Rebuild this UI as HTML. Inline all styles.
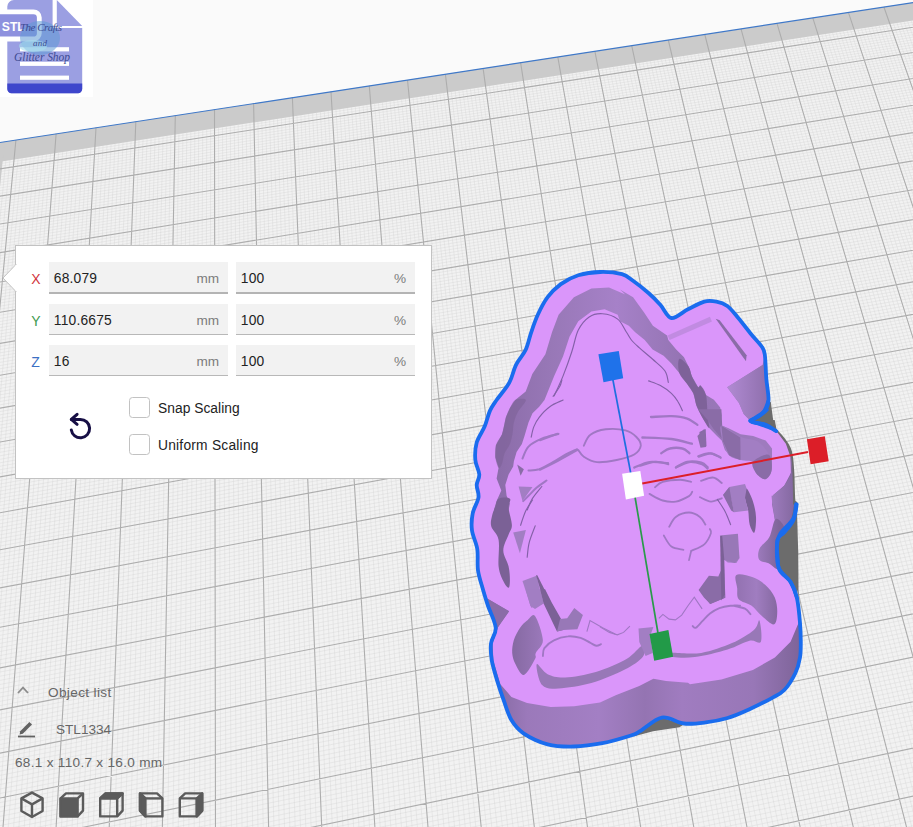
<!DOCTYPE html>
<html><head><meta charset="utf-8"><title>STL1334 - scale</title>
<style>
html,body{margin:0;padding:0;}
body{width:913px;height:827px;overflow:hidden;background:#fafafa;font-family:"Liberation Sans",sans-serif;position:relative;}
#scene{position:absolute;left:0;top:0;width:913px;height:827px;display:block;}
.logo{position:absolute;left:0;top:0;width:93px;height:97px;background:#ffffff;}
.panel{position:absolute;left:15px;top:245px;width:415px;height:232px;background:#fff;border:1px solid #c2c2c2;box-sizing:content-box;}
.notch{position:absolute;left:1.6px;top:264px;}
.row{position:absolute;left:0;height:32px;width:100%;}
.axis{position:absolute;left:15.2px;top:9px;font-size:14px;line-height:16px;}
.field{position:absolute;top:0;height:30px;width:179px;background:#f2f2f2;border-bottom:2px solid #b4b4b4;}
.r2 .field{height:30.4px;border-bottom:1.6px solid #b8b8b8;}
.field .v{position:absolute;left:4.8px;top:9.2px;font-size:13.8px;line-height:16px;color:#222;letter-spacing:0.2px;}
.field .u{position:absolute;right:8.8px;top:9.2px;font-size:13.6px;line-height:16px;color:#7c7c7c;}
.cb{position:absolute;left:113px;width:19px;height:19px;border:1.5px solid #c2c2c2;border-radius:3.5px;background:#fff;}
.cbl{position:absolute;left:142px;font-size:13.8px;line-height:16px;color:#222;letter-spacing:0.15px;}
.ol{position:absolute;color:#666;font-size:13.6px;line-height:16px;white-space:nowrap;}

</style></head><body>
<svg id="scene" width="913" height="827" viewBox="0 0 913 827">
<rect width="913" height="827" fill="#fafafa"/>
<path d="M-65.3,152.5 L988.9,-9.1 L1428.0,1060.6 L-243.5,1473.7Z" fill="#f2f2f2"/>
<path d="M-65.3,152.5 L988.9,-9.1 L995.8,7.7 L-67.9,172.2Z" fill="#cbcbcb"/>
<path d="M-65.3,152.5 L4.6,141.8 L-4.4,230.4 L-77.4,242.0Z" fill="#cbcbcb"/>
<path d="M-22.8,165.3L-169.2,1455.3M-18.7,164.6L-162.5,1453.7M-14.6,164.0L-155.8,1452.0M-10.5,163.4L-149.1,1450.4M-6.4,162.7L-142.4,1448.7M-2.3,162.1L-135.7,1447.1M1.8,161.5L-129.0,1445.4M5.8,160.8L-122.3,1443.8M9.9,160.2L-115.7,1442.1M18.1,158.9L-102.3,1438.8M22.1,158.3L-95.7,1437.2M26.2,157.7L-89.0,1435.5M30.3,157.1L-82.4,1433.9M34.3,156.4L-75.8,1432.2M38.4,155.8L-69.1,1430.6M42.4,155.2L-62.5,1429.0M46.5,154.5L-55.9,1427.3M50.5,153.9L-49.3,1425.7M58.6,152.7L-36.1,1422.4M62.7,152.0L-29.5,1420.8M66.7,151.4L-22.9,1419.2M70.8,150.8L-16.4,1417.6M74.8,150.2L-9.8,1415.9M78.8,149.5L-3.2,1414.3M82.9,148.9L3.3,1412.7M86.9,148.3L9.9,1411.1M90.9,147.7L16.4,1409.5M99.0,146.4L29.5,1406.2M103.0,145.8L36.0,1404.6M107.0,145.2L42.5,1403.0M111.0,144.6L49.0,1401.4M115.0,143.9L55.5,1399.8M119.0,143.3L62.0,1398.2M123.0,142.7L68.5,1396.6M127.0,142.1L75.0,1395.0M131.0,141.5L81.5,1393.4M139.0,140.2L94.4,1390.2M143.0,139.6L100.9,1388.6M147.0,139.0L107.4,1387.0M151.0,138.4L113.8,1385.4M155.0,137.8L120.3,1383.8M159.0,137.1L126.7,1382.2M163.0,136.5L133.1,1380.6M167.0,135.9L139.5,1379.0M170.9,135.3L146.0,1377.4M178.9,134.1L158.8,1374.3M182.9,133.4L165.2,1372.7M186.8,132.8L171.6,1371.1M190.8,132.2L178.0,1369.5M194.8,131.6L184.3,1368.0M198.7,131.0L190.7,1366.4M202.7,130.4L197.1,1364.8M206.7,129.8L203.4,1363.2M210.6,129.2L209.8,1361.7M218.5,127.9L222.5,1358.5M222.5,127.3L228.8,1357.0M226.4,126.7L235.2,1355.4M230.3,126.1L241.5,1353.8M234.3,125.5L247.8,1352.3M238.2,124.9L254.1,1350.7M242.2,124.3L260.4,1349.1M246.1,123.7L266.7,1347.6M250.0,123.1L273.0,1346.0M257.9,121.8L285.6,1342.9M261.8,121.2L291.9,1341.4M265.7,120.6L298.2,1339.8M269.7,120.0L304.4,1338.3M273.6,119.4L310.7,1336.7M277.5,118.8L317.0,1335.2M281.4,118.2L323.2,1333.6M285.3,117.6L329.5,1332.1M289.2,117.0L335.7,1330.5M297.0,115.8L348.1,1327.5M300.9,115.2L354.4,1325.9M304.8,114.6L360.6,1324.4M308.7,114.0L366.8,1322.9M312.6,113.4L373.0,1321.3M316.5,112.8L379.2,1319.8M320.4,112.2L385.4,1318.3M324.3,111.6L391.6,1316.7M328.2,111.0L397.7,1315.2M336.0,109.8L410.1,1312.2M339.8,109.2L416.2,1310.6M343.7,108.6L422.4,1309.1M347.6,108.0L428.6,1307.6M351.5,107.4L434.7,1306.1M355.3,106.8L440.8,1304.6M359.2,106.2L447.0,1303.0M363.1,105.6L453.1,1301.5M366.9,105.0L459.2,1300.0M374.6,103.8L471.4,1297.0M378.5,103.2L477.5,1295.5M382.4,102.6L483.6,1294.0M386.2,102.0L489.7,1292.5M390.1,101.4L495.8,1291.0M393.9,100.8L501.9,1289.5M397.7,100.2L508.0,1288.0M401.6,99.6L514.1,1286.5M405.4,99.0L520.1,1285.0M413.1,97.8L532.2,1282.0M416.9,97.2L538.3,1280.5M420.8,96.6L544.3,1279.0M424.6,96.0L550.4,1277.5M428.4,95.5L556.4,1276.0M432.3,94.9L562.4,1274.5M436.1,94.3L568.4,1273.0M439.9,93.7L574.4,1271.5M443.7,93.1L580.5,1270.0M451.3,91.9L592.5,1267.1M455.2,91.3L598.4,1265.6M459.0,90.7L604.4,1264.1M462.8,90.1L610.4,1262.6M466.6,89.6L616.4,1261.2M470.4,89.0L622.4,1259.7M474.2,88.4L628.3,1258.2M478.0,87.8L634.3,1256.7M481.8,87.2L640.2,1255.3M489.4,86.0L652.1,1252.3M493.2,85.4L658.1,1250.9M496.9,84.9L664.0,1249.4M500.7,84.3L669.9,1247.9M504.5,83.7L675.8,1246.5M508.3,83.1L681.7,1245.0M512.1,82.5L687.7,1243.6M515.8,81.9L693.6,1242.1M519.6,81.4L699.5,1240.6M527.2,80.2L711.2,1237.7M530.9,79.6L717.1,1236.3M534.7,79.0L723.0,1234.8M538.5,78.4L728.9,1233.4M542.2,77.9L734.7,1231.9M546.0,77.3L740.6,1230.5M549.7,76.7L746.5,1229.0M553.5,76.1L752.3,1227.6M557.2,75.5L758.1,1226.1M564.7,74.4L769.8,1223.2M568.5,73.8L775.7,1221.8M572.2,73.2L781.5,1220.4M576.0,72.6L787.3,1218.9M579.7,72.1L793.1,1217.5M583.4,71.5L798.9,1216.1M587.2,70.9L804.7,1214.6M590.9,70.3L810.5,1213.2M594.6,69.7L816.3,1211.8M602.1,68.6L827.9,1208.9M605.8,68.0L833.6,1207.5M609.5,67.4L839.4,1206.0M613.3,66.9L845.2,1204.6M617.0,66.3L850.9,1203.2M620.7,65.7L856.7,1201.8M624.4,65.1L862.4,1200.3M628.1,64.6L868.2,1198.9M631.8,64.0L873.9,1197.5M639.2,62.8L885.4,1194.7M642.9,62.3L891.1,1193.3M646.7,61.7L896.8,1191.9M650.3,61.1L902.6,1190.4M654.0,60.6L908.3,1189.0M657.7,60.0L914.0,1187.6M661.4,59.4L919.7,1186.2M665.1,58.8L925.4,1184.8M668.8,58.3L931.0,1183.4M676.2,57.1L942.4,1180.6M679.9,56.6L948.1,1179.2M683.5,56.0L953.7,1177.8M687.2,55.4L959.4,1176.4M690.9,54.9L965.1,1175.0M694.6,54.3L970.7,1173.6M698.2,53.7L976.4,1172.2M701.9,53.1L982.0,1170.8M705.6,52.6L987.6,1169.4M712.9,51.4L998.9,1166.6M716.6,50.9L1004.5,1165.2M720.2,50.3L1010.1,1163.8M723.9,49.8L1015.7,1162.5M727.5,49.2L1021.3,1161.1M731.2,48.6L1027.0,1159.7M734.8,48.1L1032.5,1158.3M738.5,47.5L1038.1,1156.9M742.1,46.9L1043.7,1155.5M749.4,45.8L1054.9,1152.8M753.1,45.2L1060.5,1151.4M756.7,44.7L1066.0,1150.0M760.3,44.1L1071.6,1148.7M764.0,43.5L1077.1,1147.3M767.6,43.0L1082.7,1145.9M771.2,42.4L1088.2,1144.5M774.9,41.9L1093.8,1143.2M778.5,41.3L1099.3,1141.8M785.7,40.2L1110.4,1139.1M789.3,39.6L1115.9,1137.7M793.0,39.1L1121.4,1136.3M796.6,38.5L1126.9,1135.0M800.2,37.9L1132.4,1133.6M803.8,37.4L1137.9,1132.3M807.4,36.8L1143.4,1130.9M811.0,36.3L1148.9,1129.5M814.6,35.7L1154.4,1128.2M821.8,34.6L1165.4,1125.5M825.4,34.0L1170.8,1124.1M829.0,33.5L1176.3,1122.8M832.6,32.9L1181.8,1121.4M836.2,32.4L1187.2,1120.1M839.8,31.8L1192.7,1118.7M843.4,31.3L1198.1,1117.4M847.0,30.7L1203.6,1116.0M850.6,30.2L1209.0,1114.7M857.7,29.0L1219.9,1112.0M861.3,28.5L1225.3,1110.7M864.9,27.9L1230.7,1109.3M868.5,27.4L1236.1,1108.0M872.0,26.8L1241.6,1106.6M875.6,26.3L1247.0,1105.3M879.2,25.7L1252.4,1104.0M882.7,25.2L1257.8,1102.6M886.3,24.6L1263.2,1101.3M893.4,23.5L1273.9,1098.6M897.0,23.0L1279.3,1097.3M900.5,22.4L1284.7,1096.0M904.1,21.9L1290.0,1094.7M907.6,21.3L1295.4,1093.3M911.2,20.8L1300.8,1092.0M914.7,20.2L1306.1,1090.7M918.3,19.7L1311.5,1089.4M921.8,19.1L1316.8,1088.0M928.9,18.0L1327.5,1085.4M932.5,17.5L1332.8,1084.1M936.0,16.9L1338.1,1082.8M939.5,16.4L1343.5,1081.5M943.1,15.8L1348.8,1080.1M946.6,15.3L1354.1,1078.8M950.1,14.8L1359.4,1077.5M953.6,14.2L1364.7,1076.2M957.2,13.7L1370.0,1074.9M964.2,12.6L1380.6,1072.3M967.7,12.0L1385.9,1071.0M971.2,11.5L1391.2,1069.7M974.8,10.9L1396.4,1068.4M978.3,10.4L1401.7,1067.1M981.8,9.9L1407.0,1065.8M985.3,9.3L1412.2,1064.5M988.8,8.8L1417.5,1063.2M992.3,8.2L1422.7,1061.9M-68.2,174.2L996.5,9.3M-68.6,176.9L997.4,11.6M-69.3,182.4L999.3,16.3M-69.7,185.2L1000.3,18.6M-70.1,187.9L1001.3,21.0M-70.4,190.7L1002.2,23.3M-70.8,193.5L1003.2,25.7M-71.2,196.3L1004.2,28.1M-71.6,199.1L1005.2,30.4M-71.9,201.9L1006.1,32.8M-72.3,204.7L1007.1,35.2M-73.1,210.4L1009.1,40.0M-73.5,213.2L1010.1,42.4M-73.9,216.0L1011.0,44.8M-74.2,218.9L1012.0,47.2M-74.6,221.8L1013.0,49.6M-75.0,224.6L1014.0,52.1M-75.4,227.5L1015.0,54.5M-75.8,230.4L1016.0,56.9M-76.2,233.3L1017.0,59.4M-77.0,239.1L1019.0,64.3M-77.4,242.0L1020.0,66.7M-77.7,244.9L1021.1,69.2M-78.1,247.9L1022.1,71.7M-78.5,250.8L1023.1,74.1M-78.9,253.7L1024.1,76.6M-79.3,256.7L1025.1,79.1M-79.7,259.7L1026.2,81.6M-80.1,262.6L1027.2,84.1M-80.9,268.6L1029.3,89.2M-81.3,271.6L1030.3,91.7M-81.8,274.6L1031.3,94.2M-82.2,277.6L1032.4,96.8M-82.6,280.6L1033.4,99.3M-83.0,283.7L1034.5,101.8M-83.4,286.7L1035.5,104.4M-83.8,289.7L1036.6,107.0M-84.2,292.8L1037.6,109.5M-85.0,298.9L1039.7,114.7M-85.5,302.0L1040.8,117.3M-85.9,305.1L1041.9,119.9M-86.3,308.2L1042.9,122.5M-86.7,311.3L1044.0,125.1M-87.1,314.4L1045.1,127.7M-87.5,317.5L1046.2,130.3M-88.0,320.7L1047.2,133.0M-88.4,323.8L1048.3,135.6M-89.2,330.1L1050.5,140.9M-89.7,333.3L1051.6,143.5M-90.1,336.5L1052.7,146.2M-90.5,339.7L1053.8,148.9M-91.0,342.9L1054.9,151.6M-91.4,346.1L1056.0,154.2M-91.8,349.3L1057.1,156.9M-92.3,352.5L1058.2,159.6M-92.7,355.7L1059.3,162.3M-93.6,362.2L1061.5,167.8M-94.0,365.5L1062.6,170.5M-94.5,368.8L1063.8,173.2M-94.9,372.0L1064.9,176.0M-95.3,375.3L1066.0,178.7M-95.8,378.6L1067.1,181.5M-96.2,381.9L1068.3,184.2M-96.7,385.2L1069.4,187.0M-97.1,388.6L1070.6,189.8M-98.0,395.3L1072.8,195.4M-98.5,398.6L1074.0,198.2M-98.9,402.0L1075.2,201.0M-99.4,405.4L1076.3,203.8M-99.9,408.7L1077.5,206.6M-100.3,412.1L1078.6,209.4M-100.8,415.5L1079.8,212.3M-101.2,419.0L1081.0,215.1M-101.7,422.4L1082.1,218.0M-102.6,429.3L1084.5,223.7M-103.1,432.7L1085.7,226.6M-103.6,436.2L1086.9,229.5M-104.0,439.7L1088.0,232.4M-104.5,443.2L1089.2,235.3M-105.0,446.6L1090.4,238.2M-105.4,450.2L1091.6,241.1M-105.9,453.7L1092.8,244.0M-106.4,457.2L1094.0,247.0M-107.3,464.3L1096.4,252.8M-107.8,467.9L1097.7,255.8M-108.3,471.4L1098.9,258.8M-108.8,475.0L1100.1,261.7M-109.3,478.6L1101.3,264.7M-109.8,482.2L1102.5,267.7M-110.3,485.8L1103.8,270.7M-110.7,489.4L1105.0,273.7M-111.2,493.1L1106.2,276.7M-112.2,500.4L1108.7,282.8M-112.7,504.1L1110.0,285.8M-113.2,507.7L1111.2,288.9M-113.7,511.4L1112.5,291.9M-114.2,515.1L1113.7,295.0M-114.7,518.9L1115.0,298.1M-115.2,522.6L1116.3,301.1M-115.7,526.3L1117.5,304.2M-116.2,530.1L1118.8,307.3M-117.2,537.6L1121.4,313.6M-117.8,541.4L1122.6,316.7M-118.3,545.2L1123.9,319.8M-118.8,549.0L1125.2,323.0M-119.3,552.8L1126.5,326.1M-119.8,556.7L1127.8,329.3M-120.3,560.5L1129.1,332.4M-120.8,564.4L1130.4,335.6M-121.4,568.2L1131.7,338.8M-122.4,576.0L1134.4,345.2M-122.9,579.9L1135.7,348.4M-123.5,583.8L1137.0,351.6M-124.0,587.8L1138.3,354.9M-124.5,591.7L1139.7,358.1M-125.1,595.7L1141.0,361.4M-125.6,599.6L1142.3,364.6M-126.1,603.6L1143.7,367.9M-126.7,607.6L1145.0,371.2M-127.8,615.6L1147.7,377.8M-128.3,619.6L1149.1,381.1M-128.9,623.7L1150.4,384.4M-129.4,627.7L1151.8,387.7M-130.0,631.8L1153.2,391.1M-130.5,635.9L1154.6,394.4M-131.1,640.0L1155.9,397.8M-131.6,644.1L1157.3,401.2M-132.2,648.2L1158.7,404.5M-133.3,656.5L1161.5,411.3M-133.8,660.7L1162.9,414.7M-134.4,664.9L1164.3,418.1M-135.0,669.1L1165.7,421.6M-135.5,673.3L1167.1,425.0M-136.1,677.5L1168.5,428.5M-136.7,681.7L1169.9,431.9M-137.3,686.0L1171.4,435.4M-137.8,690.2L1172.8,438.9M-139.0,698.8L1175.7,445.8M-139.6,703.1L1177.1,449.4M-140.1,707.4L1178.5,452.9M-140.7,711.7L1180.0,456.4M-141.3,716.1L1181.5,459.9M-141.9,720.4L1182.9,463.5M-142.5,724.8L1184.4,467.1M-143.1,729.2L1185.8,470.6M-143.7,733.6L1187.3,474.2M-144.9,742.4L1190.3,481.4M-145.5,746.9L1191.8,485.0M-146.1,751.4L1193.2,488.7M-146.7,755.8L1194.7,492.3M-147.3,760.3L1196.2,496.0M-147.9,764.8L1197.7,499.6M-148.5,769.4L1199.2,503.3M-149.1,773.9L1200.8,507.0M-149.7,778.5L1202.3,510.7M-151.0,787.6L1205.3,518.1M-151.6,792.2L1206.9,521.8M-152.2,796.8L1208.4,525.6M-152.8,801.5L1209.9,529.3M-153.5,806.1L1211.5,533.1M-154.1,810.8L1213.0,536.9M-154.7,815.5L1214.6,540.7M-155.4,820.2L1216.1,544.5M-156.0,824.9L1217.7,548.3M-157.3,834.4L1220.8,555.9M-157.9,839.1L1222.4,559.8M-158.6,843.9L1224.0,563.6M-159.2,848.7L1225.6,567.5M-159.9,853.5L1227.2,571.4M-160.5,858.3L1228.8,575.3M-161.2,863.2L1230.4,579.2M-161.8,868.0L1232.0,583.1M-162.5,872.9L1233.6,587.0M-163.8,882.7L1236.9,594.9M-164.5,887.7L1238.5,598.9M-165.1,892.6L1240.1,602.9M-165.8,897.6L1241.8,606.9M-166.5,902.6L1243.4,610.9M-167.2,907.6L1245.1,614.9M-167.8,912.6L1246.7,619.0M-168.5,917.6L1248.4,623.0M-169.2,922.7L1250.0,627.1M-170.6,932.9L1253.4,635.2M-171.3,938.0L1255.1,639.3M-172.0,943.1L1256.8,643.4M-172.6,948.3L1258.5,647.6M-173.3,953.4L1260.2,651.7M-174.0,958.6L1261.9,655.9M-174.7,963.8L1263.6,660.0M-175.5,969.0L1265.3,664.2M-176.2,974.3L1267.0,668.4M-177.6,984.8L1270.5,676.8M-178.3,990.1L1272.2,681.1M-179.0,995.5L1274.0,685.3M-179.7,1000.8L1275.7,689.6M-180.5,1006.2L1277.5,693.8M-181.2,1011.5L1279.2,698.1M-181.9,1016.9L1281.0,702.4M-182.6,1022.4L1282.8,706.8M-183.4,1027.8L1284.5,711.1M-184.9,1038.7L1288.1,719.8M-185.6,1044.2L1289.9,724.2M-186.3,1049.8L1291.7,728.6M-187.1,1055.3L1293.5,733.0M-187.8,1060.9L1295.3,737.4M-188.6,1066.5L1297.2,741.8M-189.4,1072.1L1299.0,746.3M-190.1,1077.7L1300.8,750.8M-190.9,1083.3L1302.7,755.2M-192.4,1094.7L1306.4,764.3M-193.2,1100.4L1308.2,768.8M-193.9,1106.2L1310.1,773.3M-194.7,1111.9L1312.0,777.9M-195.5,1117.7L1313.8,782.5M-196.3,1123.5L1315.7,787.1M-197.1,1129.3L1317.6,791.7M-197.9,1135.2L1319.5,796.3M-198.7,1141.0L1321.4,800.9M-200.2,1152.8L1325.2,810.2M-201.0,1158.8L1327.2,814.9M-201.9,1164.7L1329.1,819.6M-202.7,1170.7L1331.0,824.3M-203.5,1176.7L1333.0,829.1M-204.3,1182.8L1334.9,833.8M-205.1,1188.8L1336.9,838.6M-205.9,1194.9L1338.8,843.4M-206.7,1201.0L1340.8,848.2M-208.4,1213.3L1344.8,857.8M-209.2,1219.4L1346.8,862.7M-210.1,1225.6L1348.8,867.5M-210.9,1231.9L1350.8,872.4M-211.8,1238.1L1352.8,877.3M-212.6,1244.4L1354.8,882.3M-213.5,1250.7L1356.8,887.2M-214.3,1257.0L1358.9,892.1M-215.2,1263.4L1360.9,897.1M-216.9,1276.1L1365.0,907.1M-217.8,1282.6L1367.1,912.1M-218.6,1289.0L1369.1,917.2M-219.5,1295.5L1371.2,922.3M-220.4,1302.0L1373.3,927.3M-221.3,1308.5L1375.4,932.4M-222.1,1315.1L1377.5,937.6M-223.0,1321.7L1379.6,942.7M-223.9,1328.3L1381.7,947.8M-225.7,1341.6L1386.0,958.2M-226.6,1348.3L1388.1,963.4M-227.5,1355.0L1390.3,968.6M-228.4,1361.8L1392.4,973.9M-229.4,1368.5L1394.6,979.2M-230.3,1375.4L1396.7,984.5M-231.2,1382.2L1398.9,989.8M-232.1,1389.1L1401.1,995.1M-233.0,1395.9L1403.3,1000.4M-234.9,1409.8L1407.7,1011.2M-235.9,1416.8L1409.9,1016.6M-236.8,1423.8L1412.2,1022.0M-237.8,1430.8L1414.4,1027.5M-238.7,1437.9L1416.6,1032.9M-239.7,1445.0L1418.9,1038.4M-240.6,1452.1L1421.2,1043.9M-241.6,1459.3L1423.4,1049.5M-242.6,1466.5L1425.7,1055.0" stroke="#cccccc" stroke-width="0.6" fill="none" opacity="0.5"/>
<path d="M-24.6,146.3L-175.9,1457.0M15.9,140.1L-109.0,1440.5M56.1,133.9L-42.7,1424.1M96.0,127.8L23.0,1407.8M135.8,121.7L88.0,1391.8M175.3,115.6L152.4,1375.9M214.5,109.6L216.2,1360.1M253.6,103.6L279.3,1344.5M292.4,97.7L341.9,1329.0M331.0,91.8L403.9,1313.7M369.3,85.9L465.3,1298.5M407.5,80.0L526.2,1283.5M445.4,74.2L586.5,1268.6M483.1,68.4L646.2,1253.8M520.6,62.7L705.4,1239.2M557.8,57.0L764.0,1224.7M594.9,51.3L822.1,1210.3M631.7,45.7L879.7,1196.1M668.3,40.0L936.7,1182.0M704.8,34.5L993.3,1168.0M741.0,28.9L1049.3,1154.2M777.0,23.4L1104.8,1140.4M812.8,17.9L1159.9,1126.8M848.4,12.4L1214.5,1113.3M883.9,7.0L1268.5,1100.0M919.1,1.6L1322.2,1086.7M954.1,-3.8L1375.3,1073.6M988.9,-9.1L1428.0,1060.6M-68.9,179.6L998.4,14.0M-72.7,207.5L1008.1,37.6M-76.6,236.2L1018.0,61.8M-80.5,265.6L1028.2,86.6M-84.6,295.9L1038.7,112.1M-88.8,327.0L1049.4,138.2M-93.1,359.0L1060.4,165.0M-97.6,391.9L1071.7,192.6M-102.2,425.8L1083.3,220.8M-106.9,460.7L1095.2,249.9M-111.7,496.7L1107.5,279.7M-116.7,533.8L1120.1,310.4M-121.9,572.1L1133.0,342.0M-127.2,611.6L1146.4,374.5M-132.7,652.4L1160.1,407.9M-138.4,694.5L1174.2,442.3M-144.3,738.0L1188.8,477.8M-150.4,783.0L1203.8,514.4M-156.6,829.6L1219.3,552.1M-163.1,877.8L1235.2,591.0M-169.9,927.8L1251.7,631.1M-176.9,979.6L1268.7,672.6M-184.1,1033.3L1286.3,715.4M-191.6,1089.0L1304.5,759.7M-199.5,1146.9L1323.3,805.6M-207.6,1207.1L1342.8,853.0M-216.0,1269.7L1362.9,902.1M-224.8,1334.9L1383.8,953.0M-234.0,1402.9L1405.5,1005.8" stroke="#adadad" stroke-width="1.1" fill="none"/>
<path d="M-65.3,152.5L988.9,-9.1" stroke="#3f78c8" stroke-width="1.2" fill="none"/>
<defs>
<linearGradient id="wallg" gradientUnits="userSpaceOnUse" x1="490" y1="0" x2="800" y2="0"><stop offset="0" stop-color="#83689f"/><stop offset="0.12" stop-color="#9b79ba"/><stop offset="0.35" stop-color="#a37fc4"/><stop offset="0.5" stop-color="#9474b2"/><stop offset="0.62" stop-color="#a07cc0"/><stop offset="0.85" stop-color="#9877b7"/><stop offset="1" stop-color="#7e6499"/></linearGradient>
<linearGradient id="wallA" gradientUnits="userSpaceOnUse" x1="500" y1="0" x2="760" y2="0"><stop offset="0" stop-color="#8c6daa"/><stop offset="0.2" stop-color="#9878b7"/><stop offset="0.45" stop-color="#a681c8"/><stop offset="0.7" stop-color="#9474b3"/><stop offset="1" stop-color="#9e7bbe"/></linearGradient>
<linearGradient id="footL" gradientUnits="userSpaceOnUse" x1="510" y1="0" x2="545" y2="0"><stop offset="0" stop-color="#8468a0"/><stop offset="1" stop-color="#9c7abc"/></linearGradient>
<linearGradient id="footR" gradientUnits="userSpaceOnUse" x1="735" y1="0" x2="778" y2="0"><stop offset="0" stop-color="#9271b0"/><stop offset="0.5" stop-color="#a07dc0"/><stop offset="1" stop-color="#8468a0"/></linearGradient>
<linearGradient id="wallR" gradientUnits="userSpaceOnUse" x1="770" y1="0" x2="795" y2="0"><stop offset="0" stop-color="#a07dc0"/><stop offset="1" stop-color="#83689f"/></linearGradient>
<linearGradient id="tabg" gradientUnits="userSpaceOnUse" x1="728" y1="0" x2="768" y2="0"><stop offset="0" stop-color="#b08ad2"/><stop offset="1" stop-color="#8e6fac"/></linearGradient>
<linearGradient id="wallR2" gradientUnits="userSpaceOnUse" x1="758" y1="0" x2="779" y2="0"><stop offset="0" stop-color="#9c7abc"/><stop offset="1" stop-color="#7f6599"/></linearGradient>
</defs><path d="M762.7,420.0 L774.7,420.0 L776.9,431.0 L785.7,444.1 L791.6,463.8 L793.8,503.2 L796.8,504.3 L798.2,551.4 L798.6,600.1 L797.3,589.9 L796.0,593.6 L791.2,586.6 L771.4,573.3 L762.7,507.6Z" fill="#6c6c6c" />
<path d="M633.4,733.3 L661.9,717.6 L683.8,724.6 L679.4,727.2 L653.1,731.2 L633.4,736.6Z" fill="#6c6c6c" />
<path d="M768.1,402.1 L770.8,402.1 L774.4,429.6 L759.5,423.6 L750.0,420.9 L764.2,411.5Z" fill="#6c6c6c" />
<path d="M600.2,272.0 C607.5,271.8 616.5,272.7 622.0,274.2 C627.5,275.7 628.6,277.7 633.0,280.8 C637.4,283.9 643.9,289.0 648.5,293.0 C653.1,297.0 656.7,300.8 660.5,305.0 C664.3,309.2 666.9,317.3 671.5,318.0 C676.1,318.7 682.5,312.0 688.0,309.3 C693.5,306.6 699.6,302.9 704.3,301.6 C709.0,300.3 712.6,300.9 716.4,301.6 C720.2,302.3 723.6,303.3 727.3,306.0 C730.9,308.7 734.3,313.2 738.3,318.0 C742.3,322.8 747.4,329.6 751.4,334.5 C755.4,339.4 760.1,344.0 762.4,347.6 C764.7,351.2 764.4,351.3 765.0,356.4 C765.6,361.5 765.7,371.0 766.3,378.3 C766.9,385.6 768.8,394.7 768.5,400.2 C768.2,405.7 767.5,407.6 764.6,411.1 C761.8,414.6 751.4,418.8 751.4,421.0 C751.4,423.2 760.8,422.7 764.9,424.4 C769.0,426.1 771.8,427.0 775.8,431.0 C779.8,435.0 786.3,442.3 789.0,448.5 C791.7,454.7 791.5,459.6 792.2,468.2 C793.0,476.8 792.9,494.0 793.5,500.0 C794.1,506.0 796.0,501.2 796.0,504.3 C796.0,507.4 795.9,513.7 793.3,518.6 C790.7,523.5 782.9,529.2 780.2,533.9 C777.5,538.6 777.1,541.1 776.9,547.0 C776.7,552.9 776.8,563.2 779.1,569.0 C781.4,574.8 787.6,577.2 790.6,582.0 C793.6,586.8 795.3,590.9 796.9,597.7 C798.5,604.5 799.4,615.6 800.0,622.9 C800.6,630.2 800.8,635.9 800.8,641.7 C800.8,647.5 800.9,652.2 800.0,657.5 C799.1,662.8 797.9,667.8 795.3,673.2 C792.7,678.6 788.3,685.8 784.3,690.0 C780.3,694.2 777.2,695.1 771.4,698.3 C765.6,701.5 756.8,705.9 749.5,709.2 C742.2,712.5 734.9,715.8 727.6,718.0 C720.3,720.2 713.0,721.5 705.7,722.4 C698.4,723.3 691.1,724.3 683.8,723.5 C676.5,722.7 669.2,716.3 661.9,717.6 C654.6,718.9 645.2,728.2 640.0,731.2 C634.8,734.2 637.2,733.5 630.9,735.5 C624.6,737.5 611.9,741.4 602.4,743.2 C592.9,745.0 583.0,746.3 573.9,746.5 C564.8,746.7 556.0,746.5 547.6,744.3 C539.2,742.1 529.5,737.3 523.5,733.3 C517.5,729.2 514.7,725.5 511.4,720.0 C508.1,714.5 506.0,706.5 503.6,700.0 C501.2,693.5 499.3,687.6 497.3,681.1 C495.3,674.6 492.9,667.0 491.8,660.7 C490.8,654.4 490.4,648.9 491.0,643.4 C491.6,637.9 496.2,634.0 495.7,627.7 C495.2,621.4 490.0,612.0 487.9,605.7 C485.8,599.4 484.8,595.9 483.1,590.0 C481.5,584.1 479.0,577.3 478.0,570.5 C477.0,563.7 478.3,555.9 477.3,549.2 C476.3,542.6 472.8,536.6 472.0,530.6 C471.2,524.6 471.6,518.8 472.7,513.3 C473.8,507.8 477.8,502.2 478.5,497.5 C479.2,492.8 476.6,488.9 476.7,485.1 C476.8,481.3 479.5,478.7 479.3,474.5 C479.1,470.3 475.7,465.2 475.3,459.9 C474.9,454.6 475.1,448.2 476.7,442.6 C478.2,437.1 482.4,431.9 484.6,426.6 C486.8,421.3 488.0,415.0 490.0,410.6 C492.0,406.2 493.4,404.6 496.6,400.0 C499.8,395.4 506.1,388.5 509.3,382.7 C512.5,376.9 513.2,370.6 515.9,365.1 C518.6,359.6 523.2,355.3 525.7,349.8 C528.2,344.3 529.2,338.1 531.2,332.3 C533.2,326.5 535.1,320.7 537.8,314.8 C540.5,308.9 543.8,302.3 547.6,297.2 C551.4,292.1 555.7,287.8 560.8,284.1 C565.9,280.5 571.7,277.3 578.3,275.3 C584.9,273.3 592.9,272.2 600.2,272.0Z" fill="url(#wallg)" />
<path d="M764.9,424.4 C766.7,425.5 771.8,427.0 775.8,431.0 C779.8,435.0 786.3,442.3 789.0,448.5 C791.7,454.7 791.5,459.6 792.2,468.2 C793.0,476.8 792.9,494.0 793.5,500.0 C794.1,506.0 796.0,501.2 796.0,504.3 C796.0,507.4 793.8,516.2 793.3,518.6" fill="none" stroke="#6c6c6c" stroke-width="3.6" stroke-linejoin="round"/>
<path d="M600.2,272.8 L622.0,275.0 L633.0,281.6 L648.5,293.8 L660.5,305.8 L671.5,318.8 L688.0,310.1 L704.3,302.4 L716.4,302.4 L727.3,306.8 L738.3,318.8 L751.4,335.2 L761.8,348.0 L764.4,356.4 L762.6,365.1 L727.2,387.2 L739.0,402.9 L743.7,413.9 L750.0,420.5 L750.5,421.0 L765.4,424.9 L776.5,431.2 L785.9,443.8 L790.6,457.2 L790.9,472.9 L784.3,485.4 L773.3,494.9 L772.0,504.3 L774.9,520.0 L777.2,540.0 L778.0,560.0 L779.6,569.4 L790.6,582.0 L796.9,597.7 L798.5,622.9 L790.6,641.7 L774.9,657.5 L752.9,670.0 L721.4,679.5 L690.0,684.2 L688.0,682.7 L666.0,681.1 L653.4,678.8 L639.3,685.9 L615.7,695.3 L600.0,702.4 L574.3,706.3 L550.7,707.1 L527.1,703.1 L511.4,696.9 L500.4,684.3 L493.4,660.7 L492.6,643.4 L498.1,626.9 L509.1,611.2 L487.1,598.6 L484.4,590.0 L478.8,570.5 L478.1,549.2 L472.8,530.6 L473.5,513.3 L479.3,497.5 L477.5,485.1 L480.1,474.5 L476.1,459.9 L477.5,442.6 L485.4,426.6 L490.8,410.6 L497.4,400.0 L510.0,382.9 L516.6,365.3 L526.4,350.0 L531.9,332.5 L538.5,315.0 L548.3,297.6 L561.3,284.7 L578.6,276.1Z" fill="#da96fa" />
<path d="M493.9,510.0 L496.6,501.1 L501.3,490.5 L496.6,478.5 L498.6,467.8 L495.3,457.2 L495.9,445.2 L501.9,434.6 L503.9,426.6 L505.9,417.3 L509.9,408.0 L515.2,400.0 L525.7,391.4 L532.3,373.9 L545.4,354.2 L552.0,332.3 L558.6,314.8 L573.9,297.2 L591.4,288.5 L609.0,287.4 L626.5,295.0 L641.8,310.4 L620.0,289.6 L633.1,297.2 L644.1,312.6 L652.9,325.7 L667.1,335.6 L668.3,340.0 L676.2,349.4 L684.0,357.3 L688.7,366.7 L691.9,376.2 L698.2,387.2 L700.5,385.6 L706.0,395.0 L713.9,399.7 L720.2,407.6 L721.7,415.4 L720.2,424.9 L728.0,428.0 L740.6,434.3 L753.2,435.9 L765.7,440.6 L772.0,448.5 L772.0,465.7 L759.5,462.6 L750.0,459.5 L740.6,457.1 L731.2,456.3 L724.9,450.0 L721.7,440.6 L717.0,435.9 L709.2,428.0 L702.9,418.6 L696.6,406.0 L693.4,393.4 L687.2,384.0 L679.3,373.0 L671.4,363.6 L663.6,355.7 L652.6,349.4 L644.7,340.0 L635.2,332.3 L628.8,325.7 L620.0,321.3 L617.7,314.8 L604.6,309.3 L591.4,311.5 L578.3,321.3 L569.5,336.7 L563.0,356.4 L554.2,376.1 L544.5,400.0 L539.2,406.7 L532.5,413.3 L528.5,422.6 L524.5,435.9 L521.9,443.9 L516.6,451.9 L513.9,461.2 L513.2,466.5 L508.6,474.5 L505.3,485.1 L506.6,495.8 L509.9,503.8 L508.6,510.0Z" fill="url(#wallA)" />
<path d="M515.2,400.0 C512.6,401.3 511.5,405.1 509.9,408.0 C508.4,410.9 506.9,414.2 505.9,417.3 C504.9,420.4 504.6,423.7 503.9,426.6 C503.3,429.5 503.3,431.5 501.9,434.6 C500.6,437.7 497.0,441.5 495.9,445.2 C494.8,449.0 494.8,453.4 495.3,457.2 C495.7,461.0 497.5,466.7 498.6,467.8 C499.7,469.0 500.9,466.3 501.9,463.9 C502.9,461.4 503.3,456.5 504.6,453.2 C505.9,449.9 508.6,447.2 509.9,443.9 C511.2,440.6 511.9,436.8 512.6,433.3 C513.2,429.7 513.0,426.2 513.9,422.6 C514.8,419.1 515.9,415.7 517.9,412.0 C519.9,408.2 526.3,402.0 525.9,400.0 C525.4,398.0 517.9,398.7 515.2,400.0Z" fill="#7b6196" opacity="0.55"/>
<path d="M679.3,358.9 C680.9,357.8 686.6,363.8 688.7,366.7 C690.8,369.6 690.3,372.7 691.9,376.2 C693.4,379.6 696.7,385.6 698.2,387.2 C699.6,388.7 699.2,384.3 700.5,385.6 C701.8,386.9 704.8,390.0 706.0,395.0 C707.2,400.0 707.1,409.9 707.6,415.4 C708.1,420.9 709.9,427.5 709.2,428.0 C708.4,428.5 705.0,422.3 702.9,418.6 C700.8,414.9 698.2,410.2 696.6,406.0 C695.0,401.8 695.0,397.1 693.4,393.4 C691.9,389.8 689.5,387.4 687.2,384.0 C684.8,380.6 680.6,377.2 679.3,373.0 C678.0,368.8 677.7,359.9 679.3,358.9Z" fill="#7b6196" opacity="0.9"/>
<path d="M498.6,498.7 C501.0,497.3 508.2,497.1 509.9,498.7 C511.6,500.2 508.2,503.5 508.6,508.0 C508.9,512.4 511.9,520.8 511.9,525.3 C511.9,529.7 510.0,530.4 508.6,534.6 C507.1,538.8 503.3,545.2 503.3,550.6 C503.3,555.9 507.5,561.6 508.6,566.5 C509.7,571.4 509.9,576.3 509.9,579.8 C509.9,583.4 509.7,587.6 508.6,587.8 C507.5,588.0 504.9,584.7 503.3,581.1 C501.6,577.6 499.4,573.4 498.6,566.5 C497.8,559.6 499.8,546.6 498.6,539.9 C497.4,533.3 492.4,530.6 491.3,526.6 C490.2,522.6 491.3,519.3 492.0,516.0 C492.6,512.6 494.2,509.5 495.3,506.7 C496.4,503.8 496.2,500.0 498.6,498.7Z" fill="#7b6196" />
<path d="M513.2,532.6 L525.9,529.9 L519.9,553.2Z" fill="#a27ec3" />
<path d="M517.2,464.5 L523.9,469.2 L520.6,475.8Z" fill="#8a6ca7" />
<path d="M518.6,486.5 L532.5,487.1 L522.5,501.1Z" fill="#a27ec3" />
<path d="M522.5,581.1 L536.5,575.8 L543.2,603.8 L531.2,607.8Z" fill="#a27ec3" />
<path d="M536.0,575.3 L537.3,575.3 L555.1,610.4 L548.5,610.4 L542.9,598.4Z" fill="#7b6196" />
<path d="M487.1,598.6 L509.1,611.2 L498.1,626.9 L494.9,621.4Z" fill="#8a6ca7" />
<path d="M525.6,589.2 L540.5,589.2 L543.6,603.4 L535.0,608.9 L530.3,605.7Z" fill="#a27ec3" />
<path d="M540.2,589.2 L543.6,603.4 L557.0,631.6 L563.3,630.1 L561.1,619.1 L551.7,602.6 L545.1,589.2Z" fill="#7b6196" />
<path d="M560.1,619.1 L567.2,618.3 L574.3,608.1 L582.9,615.1 L577.4,629.3 L563.3,630.1 L557.0,631.6Z" fill="#9878b7" />
<path d="M535.0,615.9 C537.6,619.2 542.7,634.1 542.9,640.3 C543.0,646.4 537.1,649.7 535.8,652.9 C534.5,656.0 537.0,655.5 535.0,659.1 C533.0,662.8 527.3,674.1 524.0,674.9 C520.7,675.6 517.3,667.5 515.4,663.9 C513.4,660.2 512.5,656.8 512.2,652.9 C512.0,648.9 512.5,644.5 513.8,640.3 C515.1,636.1 517.8,631.0 520.1,627.7 C522.3,624.4 524.7,622.6 527.1,620.6 C529.6,618.7 532.4,612.7 535.0,615.9Z" fill="url(#footL)" />
<path d="M536.7,664.3 C535.8,666.2 538.5,681.1 542.1,685.1 C545.8,689.2 550.4,688.8 558.6,688.4 C566.8,688.1 580.5,686.1 591.4,683.0 C602.4,679.9 615.7,674.2 624.3,669.8 C632.9,665.4 639.9,660.7 642.9,656.7 C645.9,652.7 645.0,645.4 642.3,645.7 C639.5,646.1 634.2,654.5 626.5,658.9 C618.7,663.2 606.0,668.9 595.8,672.0 C585.6,675.1 573.2,677.1 565.1,677.5 C557.1,677.8 552.4,676.4 547.6,674.2 C542.9,672.0 537.6,662.5 536.7,664.3Z" fill="#9878b7" />
<path d="M638.5,628.5 L653.4,626.9 L650.3,635.6 L652.6,652.9 L645.6,656.0 L639.3,641.9Z" fill="#a27ec3" />
<path d="M668.5,654.0 C668.5,653.3 667.4,652.9 672.9,652.7 C678.3,652.5 691.5,654.6 701.3,652.9 C711.2,651.3 723.2,646.9 732.0,643.1 C740.8,639.3 749.3,633.7 753.9,629.9 C758.5,626.2 758.2,618.6 759.4,620.5 C760.6,622.5 762.6,638.4 760.9,641.8 C759.3,645.1 755.1,639.4 749.5,640.7 C744.0,642.0 736.8,646.7 727.6,649.4 C718.5,652.2 703.9,655.8 694.8,657.1 C685.6,658.4 677.2,657.6 672.9,657.1 C668.5,656.6 668.5,654.8 668.5,654.0Z" fill="#9878b7" />
<path d="M699.0,589.2 L724.9,589.2 L724.1,597.9 L710.0,604.1Z" fill="#8a6ca7" />
<path d="M736.4,574.9 C739.0,573.1 748.0,575.6 752.9,577.3 C757.7,579.0 761.8,581.7 765.4,585.1 C769.1,588.6 772.9,593.0 774.9,597.7 C776.8,602.4 777.5,609.0 777.2,613.4 C777.0,617.9 776.3,624.4 773.3,624.4 C770.3,624.4 762.8,616.6 759.2,613.4 C755.5,610.3 754.7,607.9 751.3,605.6 C747.9,603.2 741.1,602.2 738.7,599.3 C736.4,596.4 737.5,592.4 737.2,588.3 C736.8,584.2 733.7,576.8 736.4,574.9Z" fill="url(#footR)" />
<path d="M698.6,589.9 L708.9,575.7 L718.3,576.5 L721.4,569.4 L723.8,559.2 L725.4,597.7 L710.4,604.0 L704.1,597.7Z" fill="#8a6ca7" />
<path d="M723.8,559.2 L738.7,559.2 L736.4,563.1 L727.7,562.4Z" fill="#a27ec3" />
<path d="M697.9,409.2 L721.4,409.2 L722.2,425.7 L721.4,438.3 L713.6,428.9 L707.3,419.4Z" fill="#8a6ca7" />
<path d="M699.4,432.0 L705.7,428.9 L706.5,446.2 L701.0,446.9Z" fill="#8a6ca7" />
<path d="M721.4,425.7 C724.3,424.9 734.3,434.1 740.3,436.7 C746.3,439.3 752.9,438.6 757.6,441.4 C762.3,444.3 766.2,449.3 768.6,454.0 C770.9,458.7 772.3,465.5 771.7,469.7 C771.2,473.9 768.1,478.6 765.4,479.2 C762.8,479.7 758.1,475.8 756.0,472.9 C753.9,470.0 755.2,464.0 752.9,461.9 C750.5,459.8 745.8,461.3 741.9,460.3 C737.9,459.3 732.4,458.7 729.3,455.6 C726.2,452.4 724.3,446.4 723.0,441.4 C721.7,436.5 718.6,426.5 721.4,425.7Z" fill="#a27ec3" />
<path d="M721.4,425.7 L740.3,437.5 L740.6,460.3 L729.3,455.6 L723.0,441.4Z" fill="#8a6ca7" />
<path d="M752.9,461.9 C755.0,458.9 765.4,453.5 768.6,454.8 C771.7,456.1 772.3,465.7 771.7,469.7 C771.2,473.8 768.1,478.6 765.4,479.2 C762.8,479.7 758.1,475.8 756.0,472.9 C753.9,470.0 750.8,464.9 752.9,461.9Z" fill="#8a6ca7" />
<path d="M790.6,457.2 C790.8,456.1 791.8,458.7 792.2,466.6 C792.6,474.4 793.2,495.4 793.0,504.3 C792.7,513.2 792.0,515.3 790.6,520.0 C789.2,524.7 786.5,529.3 784.3,532.6 C782.1,535.9 778.8,542.1 777.2,540.0 C775.7,537.9 775.8,527.0 774.9,520.0 C774.0,513.0 772.0,502.2 771.7,498.0 C771.5,493.8 771.2,497.0 773.3,494.9 C775.4,492.8 781.4,489.1 784.3,485.4 C787.2,481.8 789.9,477.6 790.9,472.9 C792.0,468.2 790.4,458.2 790.6,457.2Z" fill="url(#wallR)" />
<path d="M746.6,488.6 C747.9,489.1 751.3,496.5 752.9,501.2 C754.4,505.9 755.8,511.6 756.0,516.9 C756.3,522.1 755.5,531.3 754.4,532.6 C753.4,533.9 750.8,528.4 749.7,524.7 C748.7,521.1 748.9,515.1 748.2,510.6 C747.4,506.1 745.3,501.7 745.0,498.0 C744.8,494.4 745.3,488.1 746.6,488.6Z" fill="#7b6196" />
<path d="M729.3,487.0 L745.0,483.9 L746.6,488.6 L745.0,498.0 L748.2,510.6 L734.0,512.2 L730.9,498.0 L723.0,494.9Z" fill="#a27ec3" />
<path d="M723.0,494.9 L729.3,487.0 L731.2,498.0 L734.0,512.2 L731.2,510.6Z" fill="#8a6ca7" />
<path d="M775.7,518.9 C773.2,520.4 772.1,532.0 769.4,536.9 C766.7,541.9 761.2,544.9 759.5,548.7 C757.8,552.5 757.6,557.3 759.2,559.7 C760.7,562.1 765.4,561.7 768.6,563.2 C771.8,564.7 776.8,570.7 778.3,568.8 C779.9,567.0 777.8,557.2 777.7,551.9 C777.7,546.6 776.9,541.0 778.0,536.9 C779.1,532.9 784.7,530.5 784.3,527.5 C783.9,524.5 778.2,517.3 775.7,518.9Z" fill="url(#wallR2)" />
<path d="M719.9,535.4 L737.9,533.8 L739.5,558.2 L734.8,562.9 L723.8,559.7 L720.7,545.6Z" fill="#9878b7" />
<path d="M720.2,536.2 L722.2,535.8 L724.3,559.7 L724.9,594.3 L721.4,600.6 L720.7,573.9Z" fill="#7b6196" />
<path d="M697.4,435.9 L704.4,428.8 L706.0,446.9 L700.5,447.7Z" fill="#8a6ca7" />
<path d="M727.2,387.2 L762.6,365.1 L765.7,387.2 L767.3,402.9 L762.6,412.3 L750.0,420.5 L743.7,413.9 L739.0,402.9Z" fill="url(#tabg)" />
<path d="M715.7,318.7 L719.7,320.2 L746.6,355.3 L746.0,361.2 L742.7,356.8Z" fill="#8a6ca7" />
<path d="M668.6,337.8 L710.9,319.1" stroke="#a27ec3" stroke-width="5" fill="none" opacity="0.45"/>
<path d="M767.0,410.0 C765.7,411.0 761.9,414.5 759.2,416.3 C756.4,418.1 749.5,419.6 750.5,421.0 C751.6,422.4 761.1,423.2 765.4,424.9 C769.8,426.6 774.6,430.2 776.5,431.2" fill="none" stroke="#1a6cee" stroke-width="3.4" stroke-linecap="round" opacity="1"/>
<path d="M796.9,504.3 C796.4,506.9 795.8,515.3 793.7,520.0 C791.6,524.7 787.1,529.3 784.3,532.6 C781.6,535.9 778.3,535.4 777.2,540.0 C776.2,544.6 777.6,555.1 778.0,560.0 C778.4,564.9 777.5,565.8 779.6,569.4 C781.7,573.1 787.7,577.3 790.6,582.0 C793.5,586.7 795.8,595.1 796.9,597.7" fill="none" stroke="#1a6cee" stroke-width="3.4" stroke-linecap="round" opacity="1"/>
<path d="M768.1,401.3 C767.4,402.9 766.1,408.0 764.2,410.7 C762.2,413.5 758.7,416.1 756.3,417.8 C754.0,419.5 749.5,419.9 750.0,420.9 C750.6,422.0 756.1,422.9 759.5,424.1 C762.8,425.3 768.2,427.4 770.0,428.0" fill="none" stroke="#1a6cee" stroke-width="3.4" stroke-linecap="round" opacity="1"/>
<path d="M796.0,504.3 C795.5,506.7 795.9,513.7 793.3,518.6 C790.7,523.5 782.9,529.2 780.2,533.9 C777.5,538.6 777.1,541.1 776.9,547.0 C776.7,552.9 776.8,563.2 779.1,569.0 C781.4,574.8 787.6,577.2 790.6,582.0 C793.6,586.8 795.3,590.9 796.9,597.7 C798.5,604.5 799.4,615.6 800.0,622.9 C800.6,630.2 800.8,635.9 800.8,641.7 C800.8,647.5 800.9,652.2 800.0,657.5 C799.1,662.8 797.9,667.8 795.3,673.2 C792.7,678.6 788.3,685.8 784.3,690.0 C780.3,694.2 777.2,695.1 771.4,698.3 C765.6,701.5 756.8,705.9 749.5,709.2 C742.2,712.5 734.9,715.8 727.6,718.0 C720.3,720.2 713.0,721.5 705.7,722.4 C698.4,723.3 691.1,724.3 683.8,723.5 C676.5,722.7 669.2,716.3 661.9,717.6 C654.6,718.9 645.2,728.2 640.0,731.2 C634.8,734.2 637.2,733.5 630.9,735.5 C624.6,737.5 611.9,741.4 602.4,743.2 C592.9,745.0 583.0,746.3 573.9,746.5 C564.8,746.7 556.0,746.5 547.6,744.3 C539.2,742.1 529.5,737.3 523.5,733.3 C517.5,729.2 514.7,725.5 511.4,720.0 C508.1,714.5 506.0,706.5 503.6,700.0 C501.2,693.5 499.3,687.6 497.3,681.1 C495.3,674.6 492.9,667.0 491.8,660.7 C490.8,654.4 490.4,648.9 491.0,643.4 C491.6,637.9 496.2,634.0 495.7,627.7 C495.2,621.4 490.0,612.0 487.9,605.7 C485.8,599.4 484.8,595.9 483.1,590.0 C481.5,584.1 479.0,577.3 478.0,570.5 C477.0,563.7 478.3,555.9 477.3,549.2 C476.3,542.6 472.8,536.6 472.0,530.6 C471.2,524.6 471.6,518.8 472.7,513.3 C473.8,507.8 477.8,502.2 478.5,497.5 C479.2,492.8 476.6,488.9 476.7,485.1 C476.8,481.3 479.5,478.7 479.3,474.5 C479.1,470.3 475.7,465.2 475.3,459.9 C474.9,454.6 475.1,448.2 476.7,442.6 C478.2,437.1 482.4,431.9 484.6,426.6 C486.8,421.3 488.0,415.0 490.0,410.6 C492.0,406.2 493.4,404.6 496.6,400.0 C499.8,395.4 506.1,388.5 509.3,382.7 C512.5,376.9 513.2,370.6 515.9,365.1 C518.6,359.6 523.2,355.3 525.7,349.8 C528.2,344.3 529.2,338.1 531.2,332.3 C533.2,326.5 535.1,320.7 537.8,314.8 C540.5,308.9 543.8,302.3 547.6,297.2 C551.4,292.1 555.7,287.8 560.8,284.1 C565.9,280.5 571.7,277.3 578.3,275.3 C584.9,273.3 592.9,272.2 600.2,272.0 C607.5,271.8 616.5,272.7 622.0,274.2 C627.5,275.7 628.6,277.7 633.0,280.8 C637.4,283.9 643.9,289.0 648.5,293.0 C653.1,297.0 656.7,300.8 660.5,305.0 C664.3,309.2 666.9,317.3 671.5,318.0 C676.1,318.7 682.5,312.0 688.0,309.3 C693.5,306.6 699.6,302.9 704.3,301.6 C709.0,300.3 712.6,300.9 716.4,301.6 C720.2,302.3 723.6,303.3 727.3,306.0 C730.9,308.7 734.3,313.2 738.3,318.0 C742.3,322.8 747.4,329.6 751.4,334.5 C755.4,339.4 760.1,344.0 762.4,347.6 C764.7,351.2 764.4,351.3 765.0,356.4 C765.6,361.5 765.7,371.0 766.3,378.3 C766.9,385.6 768.8,394.7 768.5,400.2 C768.2,405.7 767.5,407.6 764.6,411.1 C761.8,414.6 751.4,418.8 751.4,421.0 C751.4,423.2 760.8,422.7 764.9,424.4 C769.0,426.1 774.0,429.9 775.8,431.0" fill="none" stroke="#1a6cee" stroke-width="3.8" stroke-linejoin="round" stroke-linecap="round"/>
<path d="M554.2,395.8 C555.7,392.5 560.0,383.4 563.0,376.1 C565.9,368.8 569.2,359.7 571.7,352.0 C574.3,344.3 575.4,335.9 578.3,330.1 C581.2,324.3 585.2,319.7 589.2,317.0 C593.3,314.2 597.6,313.3 602.4,313.7 C607.1,314.0 613.7,316.0 617.7,319.1 C621.7,322.2 624.2,328.8 626.5,332.3 C628.8,335.8 629.3,337.4 631.4,340.0 C633.5,342.6 635.7,344.5 639.2,347.7 C642.8,350.9 648.4,355.4 652.7,359.3 C657.0,363.2 662.4,367.1 665.0,371.0 C667.6,374.9 667.8,380.5 668.3,382.4" fill="none" stroke="#8460a8" stroke-width="1.15" stroke-linecap="round" opacity="1"/>
<path d="M648.6,380.9 C650.6,381.7 656.6,383.5 660.4,385.6 C664.2,387.7 668.6,390.8 671.4,393.4 C674.3,396.1 675.9,398.4 677.7,401.3 C679.6,404.2 681.7,409.2 682.4,410.7" fill="none" stroke="#8460a8" stroke-width="1.15" stroke-linecap="round" opacity="1"/>
<path d="M651.0,417.0 C654.4,416.9 665.4,416.0 671.4,416.2 C677.5,416.5 682.8,417.2 687.2,418.6 C691.5,420.0 695.7,423.8 697.4,424.9" fill="none" stroke="#a077c4" stroke-width="2.32" stroke-linecap="round" opacity="1"/>
<path d="M642.4,437.5 C647.2,437.7 663.2,438.0 671.4,439.0 C679.7,440.1 688.5,443.0 691.9,443.7" fill="none" stroke="#a077c4" stroke-width="2.32" stroke-linecap="round" opacity="1"/>
<path d="M661.2,453.2 C662.7,452.4 666.3,449.2 669.9,448.5 C673.4,447.7 679.2,447.7 682.4,448.5 C685.7,449.2 688.3,452.4 689.5,453.2" fill="none" stroke="#a077c4" stroke-width="2.32" stroke-linecap="round" opacity="1"/>
<path d="M676.2,467.3 C678.0,466.4 683.0,462.6 687.2,461.8 C691.3,461.0 697.9,461.7 701.3,462.6 C704.7,463.5 706.5,466.5 707.6,467.3" fill="none" stroke="#a077c4" stroke-width="2.32" stroke-linecap="round" opacity="1"/>
<path d="M698.2,456.3 C700.0,455.8 705.5,453.0 709.2,453.2 C712.8,453.3 718.3,456.4 720.2,457.1" fill="none" stroke="#a077c4" stroke-width="2.03" stroke-linecap="round" opacity="1"/>
<path d="M640.0,465.7 C642.6,465.1 651.0,462.1 655.7,461.8 C660.4,461.6 666.2,463.8 668.3,464.2" fill="none" stroke="#a077c4" stroke-width="2.03" stroke-linecap="round" opacity="1"/>
<path d="M531.2,437.2 C531.6,435.5 532.5,429.9 533.9,426.6 C535.2,423.3 536.5,420.6 539.2,417.3 C541.8,414.0 545.8,409.5 549.8,406.7 C553.8,403.8 560.9,401.1 563.1,400.0" fill="none" stroke="#8460a8" stroke-width="1.15" stroke-linecap="round" opacity="1"/>
<path d="M522.5,458.5 C523.5,456.5 525.3,449.9 528.5,446.6 C531.7,443.2 536.8,440.7 541.8,438.6 C546.8,436.5 555.7,434.7 558.5,433.9" fill="none" stroke="#a077c4" stroke-width="2.03" stroke-linecap="round" opacity="1"/>
<path d="M528.5,470.5 C530.3,470.3 535.2,470.5 539.2,469.2 C543.2,467.8 548.0,465.0 552.5,462.5 C556.9,460.1 561.7,456.8 565.8,454.5 C569.9,452.3 575.2,450.1 577.1,449.2" fill="none" stroke="#a077c4" stroke-width="2.03" stroke-linecap="round" opacity="1"/>
<path d="M523.2,501.1 C524.1,500.2 526.3,498.0 528.5,495.8 C530.8,493.6 533.5,490.4 536.5,487.8 C539.5,485.3 544.8,481.7 546.5,480.5" fill="none" stroke="#a077c4" stroke-width="2.03" stroke-linecap="round" opacity="1"/>
<path d="M527.2,510.0 C528.1,508.1 530.1,502.4 532.5,498.4 C535.0,494.5 540.3,488.5 541.8,486.5" fill="none" stroke="#8460a8" stroke-width="1.15" stroke-linecap="round" opacity="1"/>
<path d="M520.6,525.3 C521.4,522.8 523.9,514.9 525.9,510.6 C527.9,506.4 531.4,501.8 532.5,500.0" fill="none" stroke="#8460a8" stroke-width="1.15" stroke-linecap="round" opacity="1"/>
<path d="M527.2,557.2 C527.5,554.8 527.9,547.8 529.2,542.6 C530.5,537.4 534.2,528.7 535.2,525.9" fill="none" stroke="#8460a8" stroke-width="1.15" stroke-linecap="round" opacity="1"/>
<path d="M583.8,445.7 C584.9,443.9 586.7,437.5 590.4,434.8 C594.0,432.0 599.9,430.0 605.7,429.3 C611.6,428.6 620.3,429.1 625.4,430.4 C630.5,431.7 633.8,434.4 636.4,437.0 C638.9,439.5 641.1,442.8 640.8,445.7 C640.4,448.6 638.2,452.1 634.2,454.5 C630.2,456.9 622.9,458.7 616.7,460.0 C610.5,461.2 602.4,462.7 597.0,462.1 C591.5,461.6 586.9,458.7 583.8,456.7 C580.7,454.7 579.2,451.2 578.3,450.1" fill="none" stroke="#a077c4" stroke-width="1.885" stroke-linecap="round" opacity="1"/>
<path d="M540.0,469.8 C542.9,468.4 551.3,464.3 557.5,461.1 C563.7,457.8 574.0,451.9 577.2,450.1" fill="none" stroke="#a077c4" stroke-width="2.03" stroke-linecap="round" opacity="1"/>
<path d="M540.0,440.2 L557.5,433.7" fill="none" stroke="#a077c4" stroke-width="2.03" stroke-linecap="round" opacity="1"/>
<path d="M553.1,396.4 C554.2,394.8 558.3,389.3 559.7,386.6 C561.2,383.8 561.5,381.1 561.9,380.0" fill="none" stroke="#8460a8" stroke-width="1.15" stroke-linecap="round" opacity="1"/>
<path d="M634.2,467.6 C636.8,466.7 643.9,462.9 649.5,462.1 C655.2,461.4 665.0,463.1 668.1,463.2" fill="none" stroke="#a077c4" stroke-width="2.175" stroke-linecap="round" opacity="1"/>
<path d="M675.8,467.6 C678.0,466.7 684.6,462.7 689.0,462.1 C693.3,461.6 699.0,463.2 702.1,464.3 C705.2,465.4 706.7,468.0 707.6,468.7" fill="none" stroke="#a077c4" stroke-width="2.175" stroke-linecap="round" opacity="1"/>
<path d="M698.8,456.7 C700.8,456.1 707.2,453.2 710.9,453.4 C714.5,453.6 719.1,457.0 720.7,457.8" fill="none" stroke="#a077c4" stroke-width="2.175" stroke-linecap="round" opacity="1"/>
<path d="M649.5,493.9 C651.7,495.0 658.3,499.2 662.7,500.5 C667.1,501.8 671.4,502.3 675.8,501.6 C680.2,500.8 686.2,497.7 689.0,496.1 C691.7,494.5 691.7,492.4 692.2,491.7" fill="none" stroke="#a077c4" stroke-width="1.885" stroke-linecap="round" opacity="1"/>
<path d="M655.0,487.3 C656.3,486.4 658.5,483.1 662.7,481.9 C666.9,480.6 675.5,479.7 680.2,479.7 C684.9,479.7 689.3,481.5 691.2,481.9" fill="none" stroke="#a077c4" stroke-width="1.885" stroke-linecap="round" opacity="1"/>
<path d="M701.0,480.8 C703.0,480.2 709.6,477.1 713.1,477.5 C716.5,477.8 720.4,482.0 721.8,483.0" fill="none" stroke="#a077c4" stroke-width="1.885" stroke-linecap="round" opacity="1"/>
<path d="M699.9,497.2 C701.7,497.9 707.2,501.4 710.9,501.6 C714.5,501.8 720.0,498.8 721.8,498.3" fill="none" stroke="#a077c4" stroke-width="1.885" stroke-linecap="round" opacity="1"/>
<path d="M669.2,526.8 C670.3,525.1 672.5,519.3 675.8,516.9 C679.1,514.5 684.9,512.5 689.0,512.5 C693.0,512.5 697.2,514.9 699.9,516.9 C702.7,518.9 704.5,523.3 705.4,524.6" fill="none" stroke="#a077c4" stroke-width="1.885" stroke-linecap="round" opacity="1"/>
<path d="M663.8,535.5 C665.0,537.4 668.1,544.1 671.4,546.5 C674.7,548.9 681.5,549.2 683.5,549.8" fill="none" stroke="#a077c4" stroke-width="1.74" stroke-linecap="round" opacity="1"/>
<path d="M691.2,550.9 C693.3,549.8 701.0,547.2 704.3,544.3 C707.6,541.4 710.0,535.9 710.9,533.3 C711.8,530.8 710.0,529.7 709.8,529.0" fill="none" stroke="#a077c4" stroke-width="1.74" stroke-linecap="round" opacity="1"/>
<path d="M691.2,550.9 L689.0,560.1" fill="none" stroke="#a077c4" stroke-width="1.74" stroke-linecap="round" opacity="1"/>
<path d="M717.4,499.4 C718.7,501.4 722.9,507.2 725.1,511.4 C727.3,515.6 729.7,522.4 730.6,524.6" fill="none" stroke="#8460a8" stroke-width="1.15" stroke-linecap="round" opacity="1"/>
<path d="M542.9,656.0 C543.1,654.7 542.6,650.8 544.4,648.1 C546.3,645.5 549.9,642.2 553.9,640.3 C557.8,638.3 563.5,636.7 568.0,636.4 C572.4,636.0 576.9,636.9 580.6,637.9 C584.2,639.0 587.4,641.3 590.0,642.6 C592.6,643.9 594.4,645.5 596.3,645.8 C598.1,646.0 600.2,644.5 601.0,644.2" fill="none" stroke="#a077c4" stroke-width="1.885" stroke-linecap="round" opacity="1"/>
<path d="M586.9,631.6 L590.0,620.6 L602.6,627.7 L615.1,634.0" fill="none" stroke="#a077c4" stroke-width="1.1"/>
<path d="M600.0,626.9 L609.4,632.4 L617.3,634.8 L623.6,632.4 L629.9,626.1" fill="none" stroke="#a077c4" stroke-width="1.1"/>
<path d="M658.9,618.3 L662.9,614.4 L669.1,619.1 L675.4,619.9 L681.7,615.1 L688.0,605.7 L694.3,597.1 L702.1,608.9" fill="none" stroke="#a077c4" stroke-width="1.1"/>
<path d="M692.7,626.1 C693.2,626.4 694.3,628.5 695.9,627.7 C697.4,626.9 699.8,623.8 702.1,621.4 C704.5,619.1 707.1,615.8 710.0,613.6 C712.9,611.3 716.0,609.4 719.4,608.1 C722.8,606.8 727.0,606.1 730.4,605.7 C733.9,605.3 739.4,605.7 740.0,605.7 C740.6,605.7 733.2,605.1 734.0,605.6 C734.8,606.1 742.3,607.3 745.0,608.7 C747.8,610.2 749.6,613.3 750.5,614.2" fill="none" stroke="#a077c4" stroke-width="1.885" stroke-linecap="round" opacity="1"/>
<path d="M633,485L611,370" stroke="#1f6fe0" stroke-width="1.7"/>
<path d="M633,485L660,645" stroke="#2a9a4a" stroke-width="1.7"/>
<path d="M633,485.3L808,452.1" stroke="#dc1e28" stroke-width="2"/>
<path d="M598.4,354.2 L618.8,350.9 L623.2,378.3 L603.5,382.2Z" fill="#1f72ea"/>
<path d="M622.1,473.8 L640.3,470.9 L644.1,495.7 L625.9,499.4Z" fill="#ffffff"/>
<path d="M806.9,439.2 L824.8,436.2 L828.7,461.3 L810.6,464.3Z" fill="#dc1e28"/>
<path d="M649.5,634.0 L668.4,630.1 L673.1,656.8 L654.2,660.7Z" fill="#229a48"/>
</svg>
<div class="logo">
<svg width="93" height="97" viewBox="0 0 93 97">
<path d="M13.9,0H52.6V28H82.2V89a4.2,4.2 0 0 1 -4.2,4.2H11.5a4.2,4.2 0 0 1 -4.2,-4.2V6.6A6.6,6.6 0 0 1 13.9,0Z" fill="#9b9fe2"/>
<path d="M56.8,0L82.2,26H56.8Z" fill="#9b9fe2"/>
<path d="M7.3,83.4H82.2V89a4.2,4.2 0 0 1 -4.2,4.2H11.5a4.2,4.2 0 0 1 -4.2,-4.2Z" fill="#3e46cc"/>
<rect x="20" y="47.2" width="49" height="4.2" fill="#fff"/>
<rect x="20" y="61.7" width="49" height="4.2" fill="#fff"/>
<rect x="20" y="75.6" width="49" height="4.2" fill="#fff"/>
<path d="M-6,11.8H33.5a5.8,5.8 0 0 1 5.8,5.8V33.2a5.8,5.8 0 0 1 -5.8,5.8H-6Z" fill="#8e91de" stroke="#fff" stroke-width="4.8"/>
<text x="1.8" y="31.1" font-family="Liberation Sans, sans-serif" font-weight="bold" font-size="13.7" fill="#fff" textLength="23" lengthAdjust="spacingAndGlyphs">STL</text>
<ellipse cx="40" cy="38" rx="20" ry="17" fill="#5f9ad6" opacity="0.55"/>
<ellipse cx="33" cy="46" rx="14" ry="6" fill="#a6e0ee" opacity="0.6"/>
<g font-family="Liberation Serif, serif" font-style="italic" fill="#36448c" opacity="0.92">
<text x="20" y="31" font-size="11" textLength="42">The Crafts</text>
<text x="33" y="46" font-size="9" textLength="14">and</text>
<text x="14" y="61" font-size="11.5" textLength="56">Glitter Shop</text>
</g>
</svg>
</div>

<div class="panel">
 <div class="row" style="top:16px"><span class="axis" style="color:#d2373f">X</span>
  <div class="field" style="left:33px"><span class="v">68.079</span><span class="u">mm</span></div>
  <div class="field" style="left:220px"><span class="v">100</span><span class="u">%</span></div></div>
 <div class="row r2" style="top:57.5px"><span class="axis" style="color:#3d9a50">Y</span>
  <div class="field" style="left:33px"><span class="v">110.6675</span><span class="u">mm</span></div>
  <div class="field" style="left:220px"><span class="v">100</span><span class="u">%</span></div></div>
 <div class="row r2" style="top:99px"><span class="axis" style="color:#3b70c4">Z</span>
  <div class="field" style="left:33px"><span class="v">16</span><span class="u">mm</span></div>
  <div class="field" style="left:220px"><span class="v">100</span><span class="u">%</span></div></div>
 <svg style="position:absolute;left:51px;top:164px" width="30" height="32" viewBox="0 0 30 32"><path d="M4.4,9.4H13.4A9.2,9.2 0 1 1 4.3,19.9" fill="none" stroke="#170f45" stroke-width="3" stroke-linecap="round"/><path d="M10.1,4.3L4.3,9.4L10.1,14.3" fill="none" stroke="#170f45" stroke-width="3" stroke-linecap="round" stroke-linejoin="round"/></svg>
 <div class="cb" style="top:151px"></div><div class="cbl" style="top:154.9px;letter-spacing:0.03px">Snap Scaling</div>
 <div class="cb" style="top:188px"></div><div class="cbl" style="top:191.7px;letter-spacing:0.22px">Uniform Scaling</div>
</div>
<svg class="notch" width="17" height="28" viewBox="0 0 17 28"><path d="M14.4,0L1,14L14.4,28" fill="#fff" stroke="#c2c2c2" stroke-width="1"/><rect x="13.4" y="1.2" width="3.6" height="25.6" fill="#fff"/></svg>
<svg style="position:absolute;left:16px;top:685px" width="14" height="10" viewBox="0 0 14 10"><path d="M2,8L7,2.6L12,8" fill="none" stroke="#8c8c8c" stroke-width="1.8"/></svg>
<div class="ol" style="left:48px;top:684.6px;letter-spacing:0.36px">Object list</div>
<svg style="position:absolute;left:17px;top:719px" width="20" height="20" viewBox="0 0 20 20"><path d="M3.2,12.2L12.4,3L15,5.6L5.8,14.8L2.6,15.4Z" fill="#626262"/><rect x="1" y="16.6" width="17" height="1.8" fill="#626262"/></svg>
<div class="ol" style="left:56px;top:721.6px">STL1334</div>
<div class="ol" style="left:15px;top:754.6px;letter-spacing:0.29px">68.1 x 110.7 x 16.0 mm</div>
<svg style="position:absolute;left:16.6px;top:789.6px" width="192" height="30" viewBox="0 0 192 30" fill="none" stroke="#5b5b5b" stroke-width="2.4" stroke-linejoin="round">
<path d="M15,2.6L25.6,8.4V21L15,27L4.4,21V8.4Z"/><path d="M4.4,8.4L15,14.4L25.6,8.4M15,14.4V27"/>
<g transform="translate(40,0)"><path d="M3.6,8.4L9,3.4H26V20.6L20.6,26.4H3.6Z"/><path d="M3.6,8.4H20.6V26.4H3.6Z" fill="#5b5b5b"/><path d="M20.6,8.4L26,3.4"/></g>
<g transform="translate(79.6,0)"><path d="M3.6,8.4L9,3.4H26V20.6L20.6,26.4H3.6Z"/><path d="M3.6,8.4L9,3.4H26L20.6,8.4Z" fill="#5b5b5b"/><path d="M3.6,8.4H20.6V26.4M20.6,8.4L26,3.4"/></g>
<g transform="translate(119.4,0)"><path d="M9,8.4L3.6,3.4H20.6L26,8.4V26.4H9L3.6,20.6V3.4"/><path d="M3.6,3.4L9,8.4V26.4L3.6,20.6Z" fill="#5b5b5b"/><path d="M9,8.4H26"/></g>
<g transform="translate(159.2,0)"><path d="M3.6,8.4L9,3.4H26V20.6L20.6,26.4H3.6Z"/><path d="M20.6,8.4L26,3.4V20.6L20.6,26.4Z" fill="#5b5b5b"/><path d="M3.6,8.4H20.6V26.4"/></g>
</svg>

</body></html>
